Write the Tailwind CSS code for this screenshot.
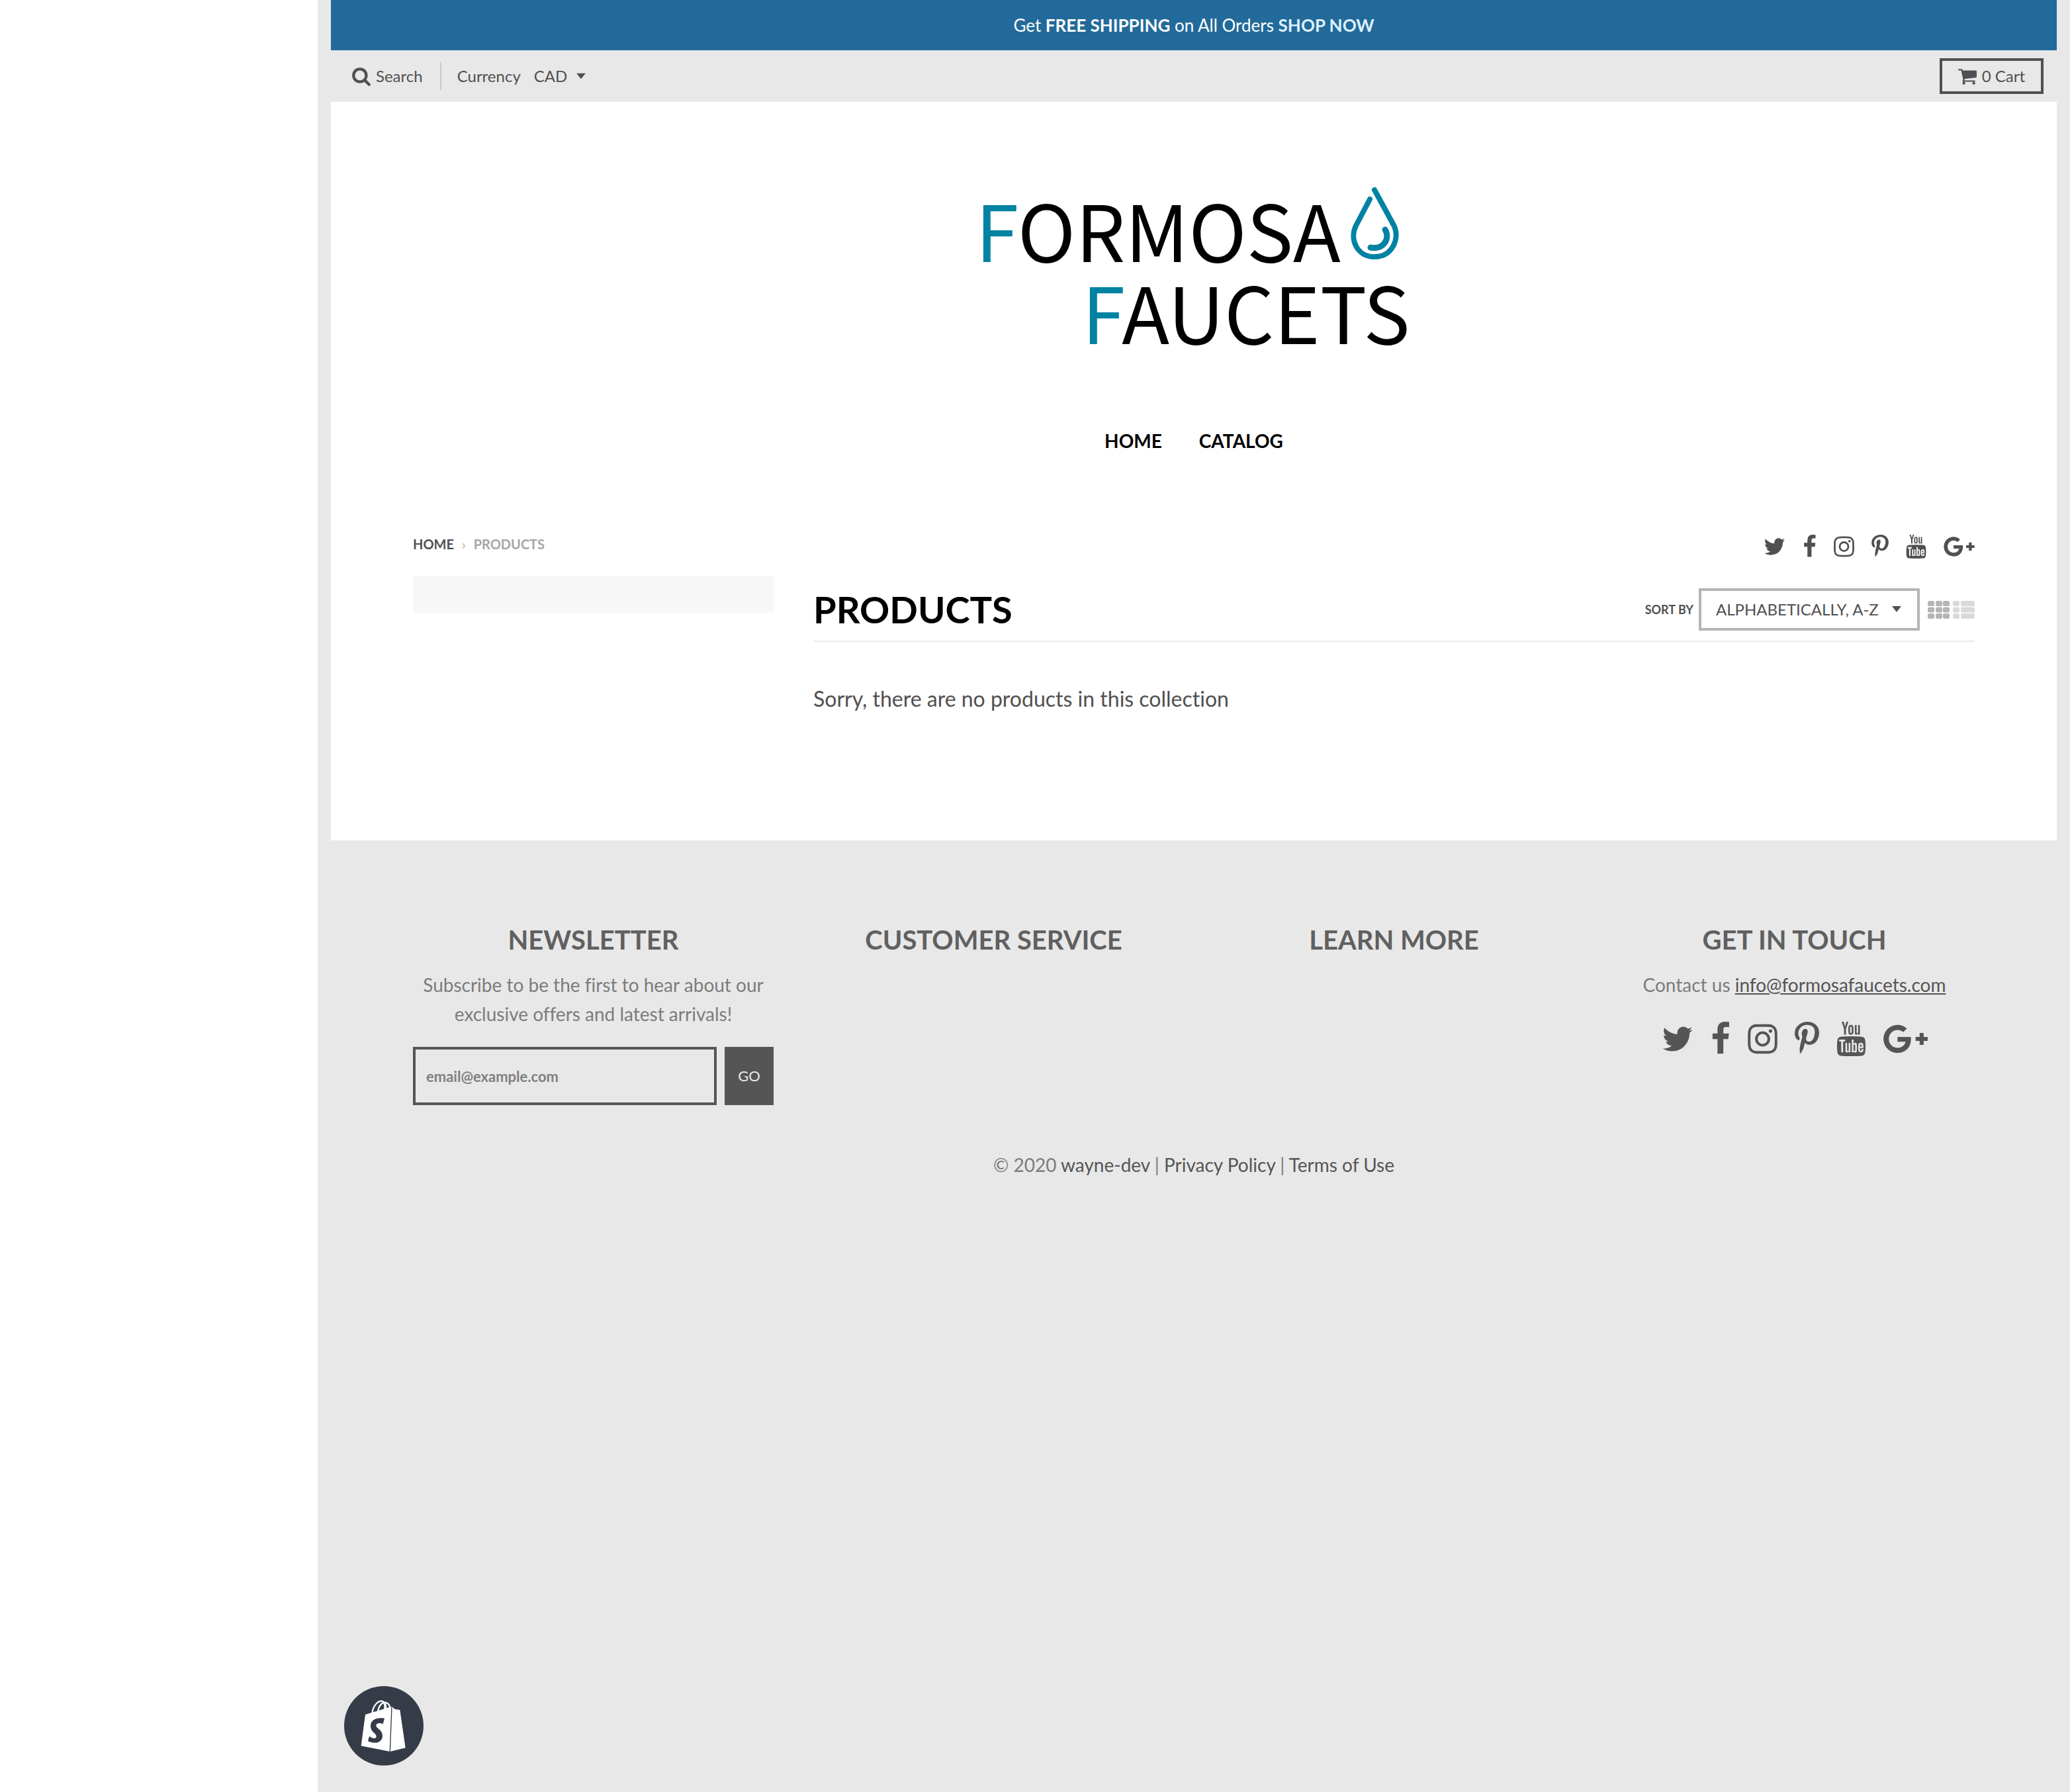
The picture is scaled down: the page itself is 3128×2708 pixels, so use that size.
<!DOCTYPE html>
<html lang="en">
<head>
<meta charset="utf-8">
<title>Products – Formosa Faucets</title>
<script src="https://cdn.jsdelivr.net/npm/@tailwindcss/browser@4"></script>
</head>
<body class="bg-white font-['Lato',sans-serif] text-[#505050] [font-variant-ligatures:no-common-ligatures]">

<svg class="hidden" aria-hidden="true">
  <symbol id="twitter" viewBox="64 0 1664 1792"><path d="M1684 408q-67 98-162 167 1 14 1 42 0 130-38 259.5t-115.5 248.5-184.5 210.5-258 146-323 54.5q-271 0-496-145 35 4 78 4 225 0 401-138-105-2-188-64.5t-114-159.5q33 5 61 5 43 0 85-11-112-23-185.5-111.5t-73.5-205.5v-4q68 38 146 41-66-44-105-115t-39-154q0-88 44-163 121 149 294.5 238.5t371.5 99.5q-8-38-8-74 0-134 94.5-228.5t228.5-94.5q140 0 236 102 109-21 205-78-37 115-142 178 93-10 186-50z"/></symbol>
  <symbol id="facebook" viewBox="384 0 1024 1792"><path d="M1343 12v264h-157q-86 0-116 36t-30 108v189h293l-39 296h-254v759h-306v-759h-255v-296h255v-218q0-186 104-288.5t277-102.5q147 0 228 12z"/></symbol>
  <symbol id="instagram" viewBox="128 0 1536 1792"><path d="M1152 896q0-106-75-181t-181-75-181 75-75 181 75 181 181 75 181-75 75-181zm138 0q0 164-115 279t-279 115-279-115-115-279 115-279 279-115 279 115 115 279zm108-410q0 38-27 65t-65 27-65-27-27-65 27-65 65-27 65 27 27 65zm-502-220q-7 0-76.5-.5t-105.5 0-96.5 3-103 10-71.5 18.5q-50 20-88 58t-58 88q-11 29-18.5 71.5t-10 103-3 96.5 0 105.5.5 76.5-.5 76.5 0 105.5 3 96.5 10 103 18.5 71.5q20 50 58 88t88 58q29 11 71.5 18.5t103 10 96.5 3 105.5 0 76.5-.5 76.5.5 105.5 0 96.5-3 103-10 71.5-18.5q50-20 88-58t58-88q11-29 18.5-71.5t10-103 3-96.5 0-105.5-.5-76.5.5-76.5 0-105.5-3-96.5-10-103-18.5-71.5q-20-50-58-88t-88-58q-29-11-71.5-18.5t-103-10-96.5-3-105.5 0-76.5.5zm768 630q0 229-5 317-10 208-124 322t-322 124q-88 5-317 5t-317-5q-208-10-322-124t-124-322q-5-88-5-317t5-317q10-208 124-322t322-124q88-5 317-5t317 5q208 10 322 124t124 322q5 88 5 317z"/></symbol>
  <symbol id="pinterest" viewBox="256 0 1280 1792"><path d="M256 597q0-108 37.5-203.5t103.5-166.5 152-123 185-78 202-26q158 0 294 66.5t221 193.5 85 287q0 96-19 188t-60 177-100 149.5-145 103-189 38.5q-68 0-135-32t-96-88q-10 39-28 112.5t-23.5 95-20.5 71-26 71-32 62.5-46 77.5-62 86.5l-14 5-9-10q-15-157-15-188 0-92 21.5-206.5t66.5-287.5 52-203q-32-65-32-169 0-83 52-156t132-73q61 0 95 40.5t34 102.5q0 66-44 191t-44 187q0 63 45 104.5t109 41.5q55 0 102-25t78.5-68 56-95 38-110.5 20-111 6.5-99.5q0-173-109.5-269.5t-285.5-96.5q-200 0-334 129.5t-134 328.5q0 44 12.5 85t27 65 27 45.5 12.5 30.5q0 28-15 73t-37 45q-2 0-17-3-51-15-90.5-56t-61-94.5-32.5-108-11-106.5z"/></symbol>
  <symbol id="youtube" viewBox="128 0 1536 1792"><path d="M1099 1244v211q0 67-39 67-23 0-45-22v-301q22-22 45-22 39 0 39 67zm338 1v46h-90v-46q0-68 45-68t45 68zm-966-218h107v-94h-312v94h105v569h100v-569zm288 569h89v-494h-89v378q-30 42-57 42-18 0-21-21-1-3-1-35v-364h-89v391q0 49 8 73 12 37 58 37 48 0 102-61v54zm429-148v-197q0-73-9-99-17-56-71-56-50 0-93 54v-217h-89v663h89v-48q45 55 93 55 54 0 71-55 9-27 9-100zm338-10v-13h-91q0 51-2 61-7 36-40 36-46 0-46-69v-87h179v-103q0-79-27-116-39-51-106-51-68 0-107 51-28 37-28 116v173q0 79 29 116 39 51 108 51 72 0 108-53 18-27 21-54 2-9 2-58zm-608-913v-210q0-69-43-69t-43 69v210q0 70 43 70t43-70zm719 751q0 234-26 350-14 59-58 99t-102 46q-184 21-555 21t-555-21q-58-6-102.5-46t-57.5-99q-26-112-26-350 0-234 26-350 14-59 58-99t103-47q183-20 554-20t555 20q58 7 102.5 47t57.5 99q26 112 26 350zm-998-1276h102l-121 399v271h-100v-271q-14-74-61-212-37-103-65-187h106l71 263zm370 333v175q0 81-28 118-38 51-106 51-67 0-105-51-28-38-28-118v-175q0-80 28-117 38-51 105-51 68 0 106 51 28 37 28 117zm335-162v499h-91v-55q-53 62-103 62-46 0-59-37-8-24-8-75v-394h91v367q0 33 1 35 3 22 21 22 27 0 57-43v-381h91z"/></symbol>
  <symbol id="gplus" viewBox="0 0 2304 1792"><path d="M1437 913q0 208-87 370.5t-248 254-369 91.5q-149 0-285-58t-234-156-156-234-58-285 58-285 156-234 234-156 285-58q286 0 491 192l-199 191q-117-113-292-113-123 0-227.5 62t-165.5 168.5-61 232.5 61 232.5 165.5 168.5 227.5 62q83 0 152.5-23t114.5-57.5 78.5-78.5 49-83 21.5-74h-416v-252h692q12 63 12 122zm867-122v210h-209v209h-210v-209h-209v-210h209v-209h210v209h209z"/></symbol>
</svg>

<div class="ml-[480px] flex min-h-screen flex-col bg-[#e8e8e8] px-5">

  <div class="flex h-[76px] items-center justify-center bg-[#226a9a] text-[26px] text-white">
    <p>Get <strong>FREE SHIPPING</strong> on All Orders <a href="#" class="font-bold text-[#def2ff]">SHOP NOW</a></p>
  </div>

  <div class="flex h-[78px] items-center pr-5 pl-8 text-2xl">
    <a href="#" class="flex items-center gap-2">
      <svg class="h-[30px] w-7 fill-current" viewBox="64 0 1664 1792"><path d="M1216 832q0-185-131.5-316.5t-316.5-131.5-316.5 131.5-131.5 316.5 131.5 316.5 316.5 131.5 316.5-131.5 131.5-316.5zm512 832q0 52-38 90t-90 38q-54 0-90-38l-343-342q-179 124-399 124-143 0-273.5-55.5t-225-150-150-225-55.5-273.5 55.5-273.5 150-225 225-150 273.5-55.5 273.5 55.5 225 150 150 225 55.5 273.5q0 220-124 399l343 343q37 37 37 90z"/></svg>
      Search
    </a>
    <div class="ml-[26px] h-[42px] w-[2px] bg-[#c8c8c8]"></div>
    <label for="currency" class="ml-6">Currency</label>
    <div class="relative ml-5">
      <select id="currency" class="w-[78px] appearance-none bg-transparent"><option>CAD</option><option>USD</option></select>
      <svg class="pointer-events-none absolute top-1/2 right-0 h-[9px] w-[14px] -translate-y-1/2 fill-current" viewBox="0 0 14 9"><path d="M0 0h14L7 9z"/></svg>
    </div>
    <button class="ml-auto flex h-[54px] items-center gap-2 border-4 border-[#505050] px-6">
      <svg class="h-[30px] w-7 fill-current" viewBox="64 0 1664 1792"><path d="M704 1536q0 52-38 90t-90 38-90-38-38-90 38-90 90-38 90 38 38 90zm896 0q0 52-38 90t-90 38-90-38-38-90 38-90 90-38 90 38 38 90zm128-1088v512q0 24-16.5 42.5t-40.5 21.5l-1044 122q13 60 13 70 0 16-24 64h920q26 0 45 19t19 45-19 45-45 19h-1024q-26 0-45-19t-19-45q0-11 8-31.5t16-36 21.5-40 15.5-29.5l-177-823h-204q-26 0-45-19t-19-45 19-45 45-19h256q16 0 28.5 6.5t19.5 15.5 13 24.5 8 26 5.5 29.5 4.5 26h1201q26 0 45 19t19 45z"/></svg>
      0 Cart
    </button>
  </div>

  <div class="bg-white px-[124px] pt-24 pb-[190px]">
    <header class="flex flex-col items-center">
      <a href="#" aria-label="Formosa Faucets">
        <svg class="h-[320px] w-[668px] overflow-visible" viewBox="1470 250 668 320" font-family="'Noto Sans CJK JP','Lato',sans-serif" font-size="118">
          <text x="1474" y="396"><tspan fill="#0082a3">F</tspan>ORMOSA</text>
          <text x="1635" y="520"><tspan fill="#0082a3">F</tspan>AUCETS</text>
          <g fill="none" stroke="#0082a3" stroke-linecap="round">
            <path stroke-width="8" d="M2070 301L2049 341C2039 361 2050 388 2077 388C2104 388 2115 361 2107 342L2077 287"/>
            <path stroke-width="9" d="M2093 347C2101 360 2091 378 2071 374"/>
          </g>
        </svg>
      </a>
      <nav class="mt-[76px] flex h-10 items-center gap-14 text-[28px] font-bold text-black">
        <a href="#">HOME</a><a href="#">CATALOG</a>
      </nav>
    </header>

    <div class="mt-[120px] flex h-[40px] items-start justify-between">
      <nav class="flex gap-3 text-xl leading-8 font-bold text-[#a6a6a6]"><a href="#" class="text-[#505050]">HOME</a><span class="font-normal">›</span><span>PRODUCTS</span></nav>
      <div class="flex gap-[26px] fill-[#505050] pt-[2px]">
        <a href="#" aria-label="Twitter"><svg class="h-9 w-[33px]"><use href="#twitter"/></svg></a>
        <a href="#" aria-label="Facebook"><svg class="h-9 w-[21px]"><use href="#facebook"/></svg></a>
        <a href="#" aria-label="Instagram"><svg class="h-9 w-[31px]"><use href="#instagram"/></svg></a>
        <a href="#" aria-label="Pinterest"><svg class="h-9 w-[26px]"><use href="#pinterest"/></svg></a>
        <a href="#" aria-label="YouTube"><svg class="h-9 w-[31px]"><use href="#youtube"/></svg></a>
        <a href="#" aria-label="Google Plus"><svg class="h-9 w-[47px]"><use href="#gplus"/></svg></a>
      </div>
    </div>

    <div class="mt-[24px] grid grid-cols-4 gap-x-15">
      <aside class="h-14 bg-[#f7f7f7]"></aside>
      <main class="col-span-3">
        <div class="flex h-[100px] items-center justify-between border-b-2 border-[#ececec] pt-1">
          <h1 class="text-[56px] font-bold text-black">PRODUCTS</h1>
          <div class="flex items-center">
            <label for="sort" class="mr-2 text-lg font-bold">SORT BY</label>
            <div class="relative mr-3">
              <select id="sort" class="h-16 w-[334px] appearance-none border-4 border-[#b5b5b5] bg-white px-[22px] text-2xl"><option>ALPHABETICALLY, A-Z</option><option>ALPHABETICALLY, Z-A</option></select>
              <svg class="pointer-events-none absolute top-[27px] right-7 h-[9px] w-[14px] fill-current" viewBox="0 0 14 9"><path d="M0 0h14L7 9z"/></svg>
            </div>
            <div class="flex gap-1">
              <button aria-label="Grid view" class="text-[#b5b5b5]"><svg class="h-[27px] w-[34px] fill-current" viewBox="0 0 34 27"><rect width="10" height="8" rx="2.500"/><rect x="12" width="10" height="8" rx="2.500"/><rect x="23" width="10" height="8" rx="2.500"/><rect y="9.500" width="10" height="8" rx="2.500"/><rect x="12" y="9.500" width="10" height="8" rx="2.500"/><rect x="23" y="9.500" width="10" height="8" rx="2.500"/><rect y="19" width="10" height="8" rx="2.500"/><rect x="12" y="19" width="10" height="8" rx="2.500"/><rect x="23" y="19" width="10" height="8" rx="2.500"/></svg></button>
              <button aria-label="List view" class="text-[#d9d9d9]"><svg class="h-[27px] w-[33px] fill-current" viewBox="0 0 33 27"><rect width="10" height="8" rx="2.500"/><rect x="12" width="21" height="8" rx="2.500"/><rect y="9.500" width="10" height="8" rx="2.500"/><rect x="12" y="9.500" width="21" height="8" rx="2.500"/><rect y="19" width="10" height="8" rx="2.500"/><rect x="12" y="19" width="21" height="8" rx="2.500"/></svg></button>
            </div>
          </div>
        </div>
        <p class="mt-[62px] text-[32px] leading-[48px]">Sorry, there are no products in this collection</p>
      </main>
    </div>
  </div>

  <footer class="px-[124px] pt-[120px] text-center text-[28px] leading-[44px] text-[#7c7c7c]">
    <div class="grid grid-cols-4 gap-x-15">
      <section>
        <h2 class="mb-4 text-[40px] leading-[60px] font-bold text-[#606060]">NEWSLETTER</h2>
        <p class="px-2">Subscribe to be the first to hear about our exclusive offers and latest arrivals!</p>
        <form class="mt-7 flex gap-3">
          <input type="email" aria-label="Email address" placeholder="email@example.com" class="h-[88px] min-w-0 flex-1 border-4 border-[#555] bg-transparent px-4 text-[22px] font-bold text-[#555] placeholder:text-[#808080]">
          <button class="h-[88px] w-[74px] bg-[#555] text-[22px] text-[#e8e8e8]">GO</button>
        </form>
      </section>
      <section><h2 class="mb-4 text-[40px] leading-[60px] font-bold text-[#606060]">CUSTOMER SERVICE</h2></section>
      <section><h2 class="mb-4 text-[40px] leading-[60px] font-bold text-[#606060]">LEARN MORE</h2></section>
      <section>
        <h2 class="mb-4 text-[40px] leading-[60px] font-bold text-[#606060]">GET IN TOUCH</h2>
        <p>Contact us <a href="#" class="text-[#555] underline">info@formosafaucets.com</a></p>
        <div class="mt-[34px] flex justify-center gap-[26px] fill-[#555]">
          <a href="#" aria-label="Twitter"><svg class="h-[52px] w-12"><use href="#twitter"/></svg></a>
          <a href="#" aria-label="Facebook"><svg class="h-[52px] w-[30px]"><use href="#facebook"/></svg></a>
          <a href="#" aria-label="Instagram"><svg class="h-[52px] w-[45px]"><use href="#instagram"/></svg></a>
          <a href="#" aria-label="Pinterest"><svg class="h-[52px] w-[37px]"><use href="#pinterest"/></svg></a>
          <a href="#" aria-label="YouTube"><svg class="h-[52px] w-[45px]"><use href="#youtube"/></svg></a>
          <a href="#" aria-label="Google Plus"><svg class="h-[52px] w-[67px]"><use href="#gplus"/></svg></a>
        </div>
      </section>
    </div>
    <p class="mt-[68px]">© 2020 <a href="#" class="text-[#555]">wayne-dev</a> | <a href="#" class="text-[#555]">Privacy Policy</a> | <a href="#" class="text-[#555]">Terms of Use</a></p>
  </footer>
</div>

<a href="#" aria-label="Shopify" class="fixed bottom-10 left-[520px] size-30">
  <svg class="size-full" viewBox="60 54 360 360">
    <circle cx="240" cy="234" r="180" fill="#353c48"/>
    <g fill="#fff">
      <path d="M156 183L274 147L266 350L137 325Z"/>
      <path d="M278 147L289 158L313 162L338 334L270 350Z"/>
    </g>
    <g fill="none" stroke="#fff" stroke-width="7">
      <path d="M187 178C190 146 212 119 232 122C248 126 250 142 250 158"/>
      <path d="M213 170C216 144 232 126 246 128C260 130 266 140 268 152"/>
      <path d="M232 122C246 130 246 146 244 160"/>
    </g>
    <path fill="#353c48" d="M243 200L236 226C222 218 204 222 205 234C207 247 234 252 234 279C234 308 204 320 168 303L174 281C188 293 206 294 206 282C206 268 180 263 180 235C180 206 208 194 243 200Z"/>
  </svg>
</a>
</body>
</html>
